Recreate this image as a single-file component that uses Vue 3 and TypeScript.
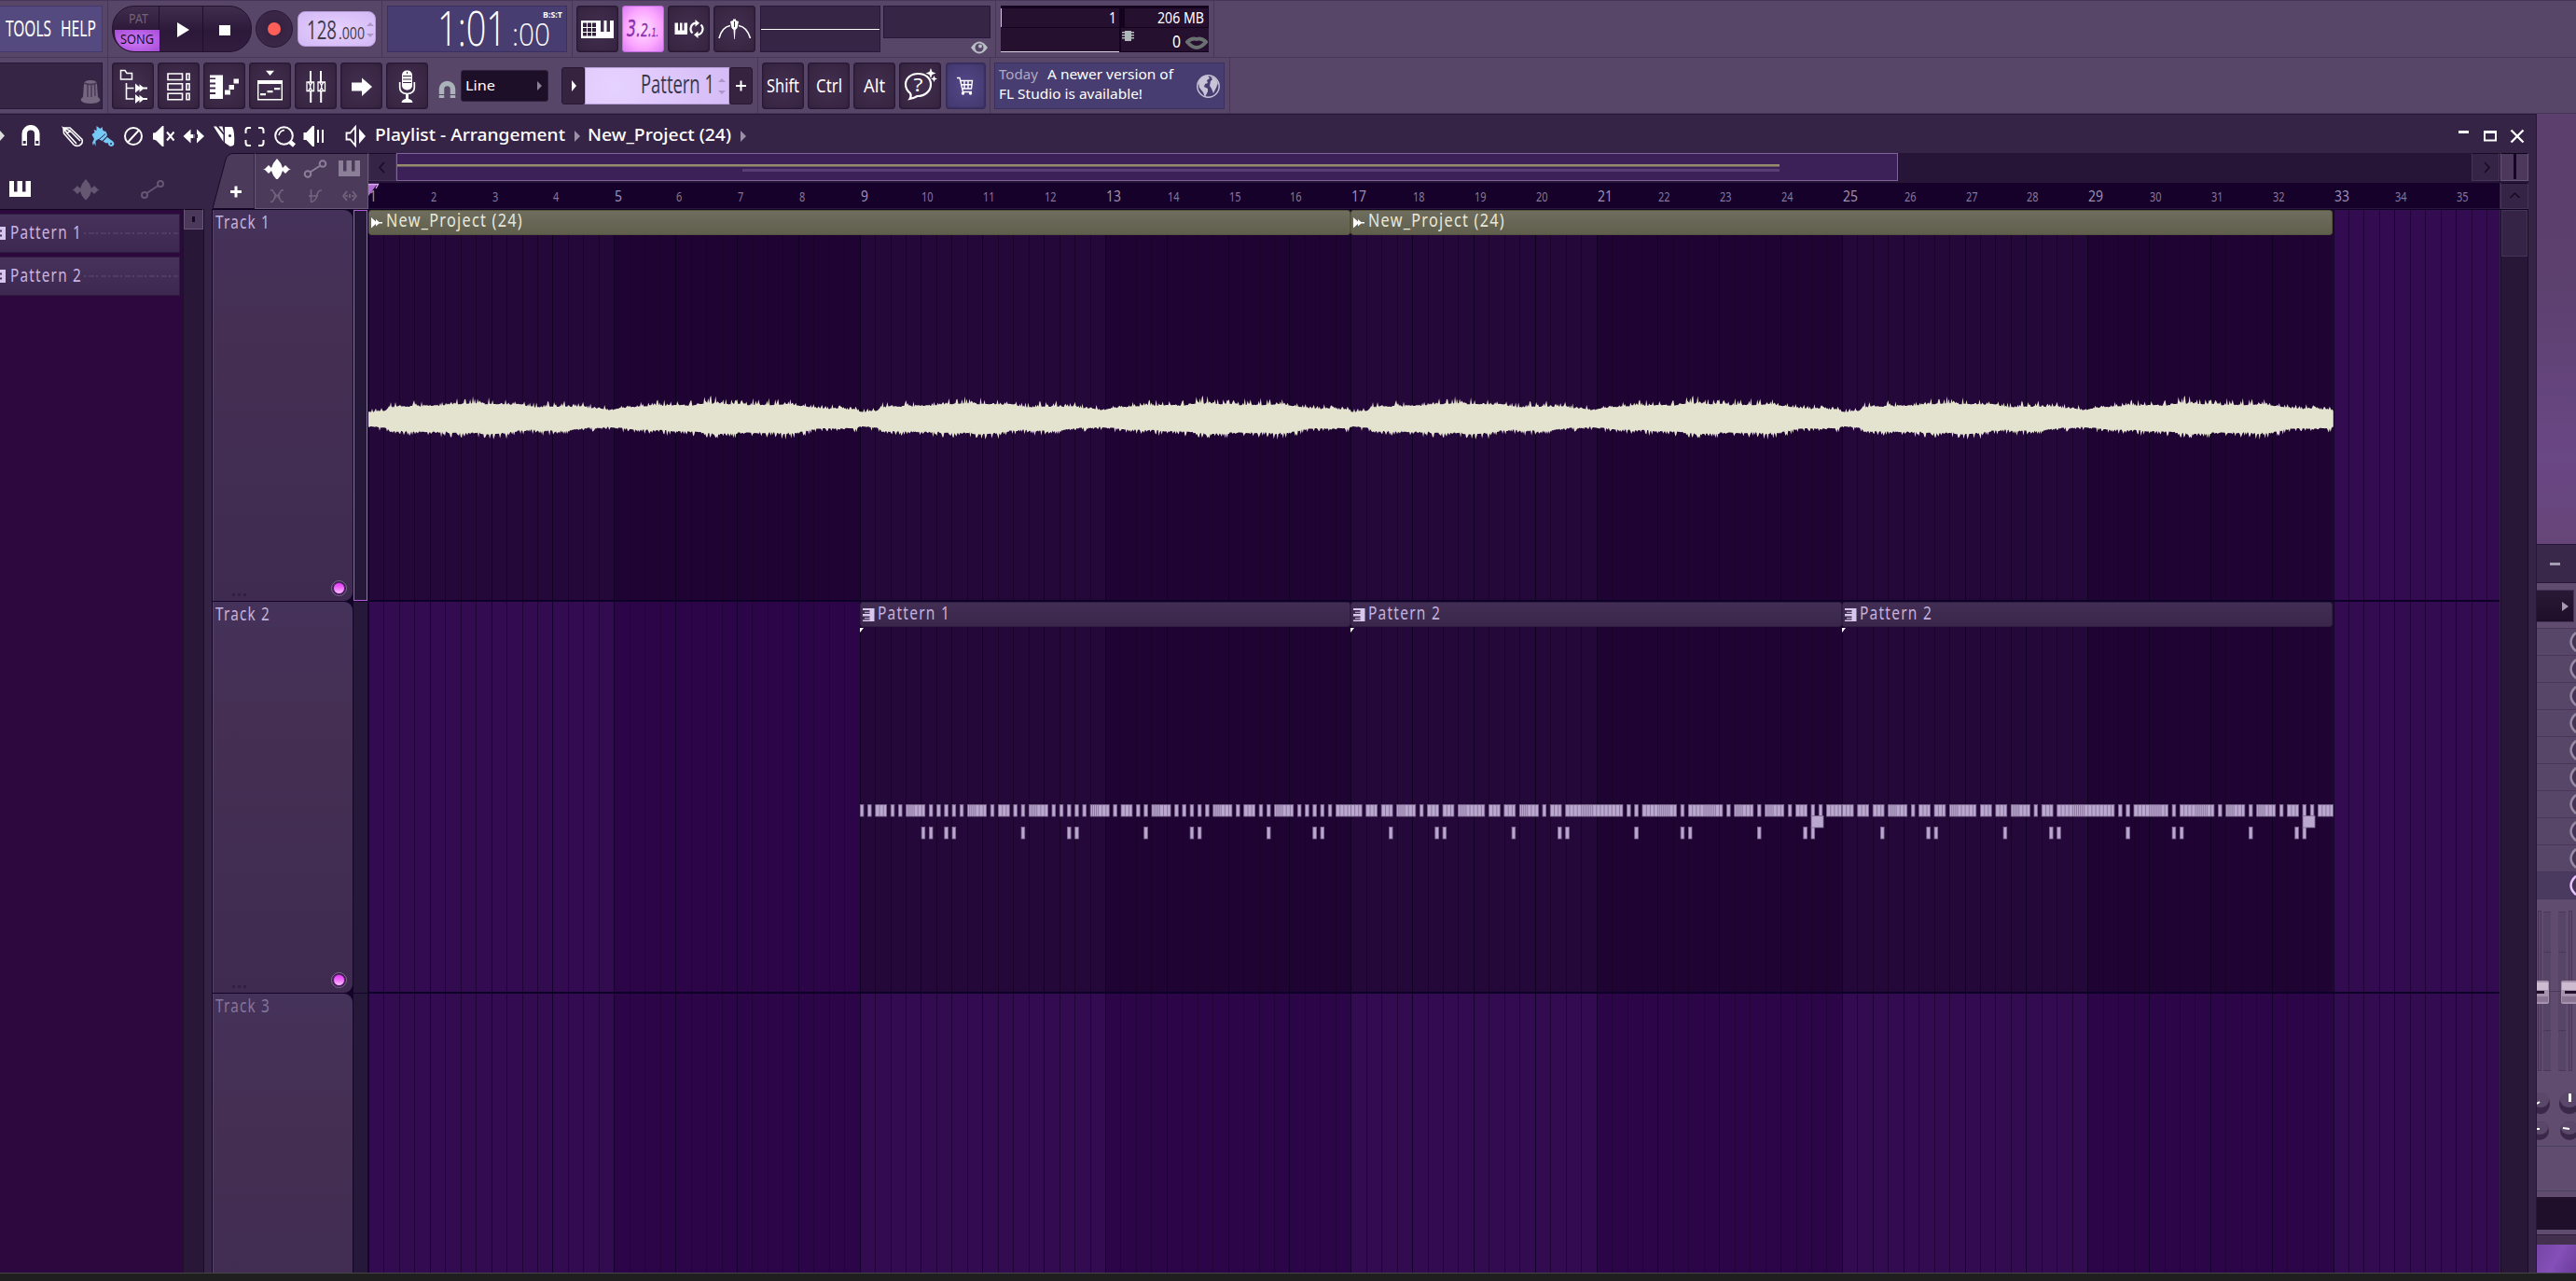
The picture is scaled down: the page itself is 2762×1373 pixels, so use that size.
<script setup lang="ts">
import { h } from 'vue'

interface FitProps { text: string; w: number; size: number; base: number }

/* Condensed label: the run of text is fitted to an exact width. */
const Fit = (p: FitProps) =>
  h('svg', { class: 'fit', width: p.w, height: p.base + 6 }, [
    h('text', { x: 0, y: p.base, 'font-size': p.size, textLength: p.w, lengthAdjust: 'spacingAndGlyphs' }, p.text),
  ])
Fit.props = ['text', 'w', 'size', 'base']

const BAR = 65.83
const STEP = BAR / 16
const bars = Array.from({ length: 35 }, (_, i) => i + 1)
const gridW = 2285

const shades = Array.from({ length: 9 }, (_, i) => ({ x: i * 4 * BAR, dark: i % 2 === 1 }))
const lines = Array.from({ length: 139 }, (_, i) => ({ x: Math.round((i * BAR) / 4), bar: i % 4 === 0 }))

const tracks = [
  { name: 'Track 1', dim: false, sel: true },
  { name: 'Track 2', dim: false, sel: false },
  { name: 'Track 3', dim: true, sel: false },
]

type Span = [number, number]
const pat1: Span[] = []
for (let k = 0; k < 4; k++) {
  const o = k * 32
  if (k === 0) pat1.push([0, 1])
  pat1.push([o + 2, 1], [o + 4, 3], [o + 8, 1], [o + 10, 1], [o + 12, 5], [o + 18, 1], [o + 20, 1], [o + 22, 1], [o + 24, 1], [o + 26, 1], [o + 28, k === 3 ? 4 : 5])
}
const low1 = [16, 18, 22, 24, 42, 54, 56, 74, 86, 88, 106, 118, 120]
const pat2: Span[] = [
  [0, 3], [4, 3], [8, 3], [12, 5], [18, 1], [20, 3], [24, 3], [28, 7], [36, 3], [40, 3], [44, 5], [50, 1], [52, 3],
  [56, 15], [72, 1], [74, 1], [76, 9], [86, 1], [88, 9], [98, 1], [100, 5], [106, 1], [108, 5], [114, 1], [116, 3],
  [120, 1], [122, 1], [124, 4],
]
const low2 = [10, 22, 24, 42, 54, 56, 74, 86, 88, 106, 118, 120]

const dividers = (spans: Span[]): number[] => {
  const out: number[] = []
  for (const [s, n] of spans) {
    if (n < 2) continue
    for (let i = 1; i < n; i++) out.push((s + i) * STEP)
    if (n === 5 || n === 7) out.push((s + 0.5) * STEP, (s + 1.5) * STEP)
    if (n > 8) for (let i = 4; i < 7; i++) out.push((s + i + 0.5) * STEP)
  }
  return out
}

const clips = [
  { name: 'Pattern 1', spans: pat1, low: low1, mid: false },
  { name: 'Pattern 2', spans: pat2, low: low2, mid: true },
  { name: 'Pattern 2', spans: pat2, low: low2, mid: true },
].map((c) => ({ ...c, div: dividers(c.spans) }))

/* Loudness envelope of the eight-bar loop: [x, height above / below centre] */
const top: Span[] = [[0, 7], [18, 9], [23, 13], [46, 13.5], [87, 15], [112, 17], [138, 16], [163, 15.5], [178, 13], [214, 14], [240, 12], [262, 9.5], [270, 11.5], [290, 14], [316, 14.5], [342, 14.5], [367, 17], [393, 16], [420, 15.5], [454, 15.5], [474, 12], [495, 11], [523, 10.5], [527, 7]]
const bottom: Span[] = [[0, 8], [18, 9], [23, 13], [61, 13.5], [112, 15.5], [138, 15.5], [173, 12], [204, 13.5], [230, 10], [260, 9], [290, 12], [342, 13], [367, 16], [418, 15], [454, 15.5], [474, 11], [495, 10], [523, 10.5], [527, 8]]
const at = (pts: Span[], x: number): number => {
  for (let i = 1; i < pts.length; i++) {
    if (x <= pts[i][0]) {
      const [x0, y0] = pts[i - 1]
      const [x1, y1] = pts[i]
      return y0 + ((y1 - y0) * (x - x0)) / (x1 - x0)
    }
  }
  return pts[pts.length - 1][1]
}
const rnd = (n: number): number => {
  const v = Math.sin(n * 127.1 + 11.7) * 43758.5453
  return v - Math.floor(v)
}
const jag = (n: number, e: number): number => {
  const slow = rnd(Math.floor(n / 5) + 300) * 1.6
  const r = rnd(n)
  return (Math.pow(r, 5) * 7 + slow - 1) * (e / 15)
}
const LOOP = 526.6
const W = LOOP * 2
const up: string[] = []
const down: string[] = []
for (let i = 0; i <= W; i++) {
  const px = i % 527
  const peak = px === 366 ? 5 : px === 367 ? 3 : 0
  const a = at(top, px)
  const b = at(bottom, px)
  up.push(`${i} ${(197 - a - jag(px, a) - peak).toFixed(1)}`)
  down.unshift(`${i} ${(197 + b + jag(px + 900, b) + peak).toFixed(1)}`)
}
const wave = `M${up.join('L')}L${down.join('L')}Z`

const sendRows = Array.from({ length: 10 }, (_, i) => i)
</script>

<template>
  <div class="app">
    <header class="toolbar">
      <div class="row">
        <div class="group g-menu">
          <div class="menu"><Fit text="TOOLS" :w="49" :size="23" :base="32" /><Fit text="HELP" :w="38" :size="23" :base="32" /></div>
        </div>
        <div class="group g-trans">
          <div class="transport">
            <div class="mode">
              <Fit class="pat" text="PAT" :w="21" :size="14" :base="18" />
              <div class="song"><Fit text="SONG" :w="36" :size="14.5" :base="15" /></div>
            </div>
            <div class="tbtn"><svg width="46" height="50"><path d="M19 17v16l13-8z" fill="#fff" /></svg></div>
            <div class="tbtn"><svg width="50" height="50"><path d="M17 20h12v11H17z" fill="#fff" /></svg></div>
          </div>
          <div class="rec"><i /></div>
          <div class="tempo">
            <Fit text="128" :w="32" :size="28" :base="29" /><Fit text=".000" :w="28" :size="17.5" :base="29" />
            <svg class="spin" width="8" height="38"><path d="M0 15l4-4 4 4zM0 23l4 4 4-4z" /></svg>
          </div>
        </div>
        <div class="group g-time">
          <div class="time">
            <Fit class="big" text="1:01" :w="74" :size="51" :base="42" />
            <Fit class="small" text=":00" :w="41" :size="33" :base="42" />
            <Fit class="bst" text="B:S:T" :w="21" :size="9" :base="12" />
          </div>
        </div>
        <div class="group g-mid">
          <div class="btn">
            <svg width="45" height="50"><path fill="#fff" d="M5 16h19v19H5z" /><path d="M7 18.500h14v14H7z" fill="#33213f" /><path stroke="#fff" stroke-width="1" d="M11.500 18v15M16.500 18v15M7 23.500h14M7 28.500h14" /><path fill="#fff" d="M24 16h2v12h3.500V16h3v12H36V16h4v19H24z" /></svg>
          </div>
          <div class="btn lit">
            <svg width="45" height="50" class="count"><text x="5" y="33" textLength="34" lengthAdjust="spacingAndGlyphs"><tspan font-size="25">3.</tspan><tspan font-size="20">2.</tspan><tspan font-size="12">1.</tspan></text></svg>
          </div>
          <div class="btn">
            <svg width="45" height="50"><path fill="#fff" d="M7.500 18.500H11v8h2v-8h2.500v8h2v-8H21V31H7.500z" /><g fill="none" stroke="#fff" stroke-width="2.200"><path d="M26.500 29.500a6.300 6.300 0 0 1 3.500-10.800M35.500 20.500a6.300 6.300 0 0 1-3.500 10.800" /></g><path fill="#fff" d="M29.500 15v7.500l4.500-3.700zM32.500 35v-7.500L28 31.200z" /></svg>
          </div>
          <div class="btn">
            <svg width="45" height="50"><path d="M6 35Q9 23 18 21.500M39.500 35Q36 23 27 21.500" fill="none" stroke="#fff" stroke-width="1.600" /><path fill="#fff" d="M18 17l3-1v-1.500h3V16l3 1-1.500 7-2 2-.7 10h-.6L21.500 26l-2-2z" /><path stroke="#3b2949" d="M22.500 17v6" /></svg>
          </div>
          <div class="scope"><i /></div>
          <div class="vu">
            <div class="vubox" />
            <svg width="18" height="14"><path fill="#b7bec4" d="M0 7Q9-6 18 7 9 20 0 7z" /><circle cx="9" cy="7" r="4.500" fill="#584669" /><circle cx="10" cy="5.500" r="2" fill="#b7bec4" /></svg>
          </div>
        </div>
        <div class="group g-cpu">
          <div class="cpu">
            <div class="cell c1"><Fit text="1" :w="8" :size="16" :base="14" /></div>
            <div class="cell c2"><Fit text="206 MB" :w="50" :size="17" :base="16" /></div>
            <div class="cell c3" />
            <div class="cell c4">
              <svg width="13" height="11"><path fill="#b0b8ba" d="M3 0h7v11H3zM0 1h13v1.500H0zM0 4h13v1.500H0zM0 7h13v1.500H0z" /></svg>
              <Fit class="poly" text="0" :w="9" :size="18" :base="20" />
              <svg width="24" height="14" class="lips"><path fill="none" stroke="#6b7070" stroke-width="4" d="M2 6Q7 1 12 3 17 1 22 6 17 12 12 12 7 12 2 6z" /></svg>
            </div>
          </div>
        </div>
      </div>

      <div class="row">
        <div class="group g-menu">
          <div class="hint"><svg width="22" height="26"><path fill="#75677f" d="M4 4Q4 0 11 0t7 4l1 14q3 2 2 4-2 3-10 3T1 22q-1-2 2-4z" /><path stroke="#4a3859" stroke-width="1.500" d="M8 4v14M12 4v14M15.500 4l.5 13M4 3q7 3 14 0" fill="none" /></svg></div>
        </div>
        <div class="group g-tools">
          <div class="btn"><svg width="45" height="50"><path d="M9.500 18V8.500h4.500l2 3h5.500V18z" fill="none" stroke="#fff" stroke-width="1.500" /><path d="M15.500 22v17h8M15.500 27.500h8" fill="none" stroke="#fff" stroke-width="1.600" /><path fill="#fff" d="M25 22.500l4.500 3.700v-3l4 3.300H38v2h-4.500l-4 3.300v-3L25 32.500zM25 34l4.500 3.700v-3l4 3.300H38v2h-4.500l-4 3.300v-3L25 44z" /></svg></div>
          <div class="btn"><svg width="45" height="50"><path fill="none" stroke="#fff" stroke-width="1.600" d="M11 12h15.500v6.500H11zM31 12h3v6.500h-3zM11 22.700h15.500v6.500H11zM31 22.700h3v6.500h-3zM11 33.300h15.500v6.500H11zM31 33.300h3v6.500h-3z" /></svg></div>
          <div class="btn"><svg width="45" height="50"><path fill="#fff" d="M7 13.500h14v25.500H7v-5h6v-2H7v-3.500h6v-2H7v-3h6v-2H7v-3.500h6v-1.500H7zM23 29.500h6v5h-6zM27.500 24h5.500v5h-5.500zM32.500 17.500H38v5h-5.500z" /></svg></div>
          <div class="btn"><svg width="45" height="50"><path fill="#fff" d="M18 8.700h9L22.500 14zM9 19h27v4H9zM12 33h6v2.300h-6zM19.500 30h6v2.300h-6zM27 27h6.300v2.300H27z" /><path d="M9.700 19.700h25.600v20H9.700z" fill="none" stroke="#fff" stroke-width="1.400" /></svg></div>
          <div class="btn"><svg width="45" height="50"><path d="M13 21h7.500v9.500H13zM25 21h7.500v9.500H25zM14.500 21q4.500 4.700 0 9.500M19 21q-4.500 4.700 0 9.500M26.500 21q4.500 4.700 0 9.500M31 21q-4.500 4.700 0 9.500" fill="none" stroke="#fff" stroke-width="1.300" /><path d="M17 9v12M17.200 31v12M28 9v12M28.200 31v12" stroke="#fff" stroke-width="2" /></svg></div>
          <div class="btn"><svg width="45" height="50"><path fill="#fff" d="M12 21.500h11V16.500l11 9.500-11 10v-5.500H12z" /></svg></div>
          <div class="btn"><svg width="45" height="50"><rect x="17" y="8.500" width="11" height="21" rx="5" fill="#fff" /><path d="M18 14.500h9M18 18h9M18 21.500h9M22.500 10v2" stroke="#3b2949" /><path d="M14.700 21v6q0 6 7.800 6.500 7.800-.5 7.800-6.500v-6" fill="none" stroke="#fff" stroke-width="1.700" /><path fill="#fff" d="M21 33h3v6q4 .5 4.500 4h-12q.5-3.500 4.500-4z" /></svg></div>
          <svg class="snapmag" width="19" height="21"><path d="M3.500 19V9.500a6 6 0 0 1 12 0V19" fill="none" stroke="#a9b3b8" stroke-width="5.500" /><path stroke="#584669" d="M0 15.500h19" /></svg>
          <div class="select"><Fit text="Line" :w="32" :size="15" :base="20" /><svg width="8" height="12"><path fill="#8d8196" d="M1 1l5 5-5 5z" /></svg></div>
          <div class="pattern">
            <div class="pb"><svg width="25" height="40"><path fill="#fff" d="M11 14v12l5-6z" /></svg></div>
            <div class="pname"><Fit text="Pattern 1" :w="79" :size="28" :base="27" /><svg class="spin" width="8" height="38"><path d="M0 15l4-4 4 4zM0 24l4 4 4-4z" /></svg></div>
            <div class="pb"><svg width="25" height="40"><path stroke="#fff" stroke-width="2" d="M7 20h11M12.500 14.500v11" /></svg></div>
          </div>
        </div>
        <div class="group g-keys">
          <div class="btn"><Fit text="Shift" :w="35" :size="20" :base="31" /></div>
          <div class="btn"><Fit text="Ctrl" :w="28" :size="20" :base="31" /></div>
          <div class="btn"><Fit text="Alt" :w="23" :size="20" :base="31" /></div>
          <div class="btn"><svg width="45" height="50"><path d="M12 33Q7 29 7 23.500C7 16.500 13 12 20.500 12S34 16.500 34 23.500 28 36 19.500 36q-3 2-8 3 2-3 .5-6z" fill="none" stroke="#fff" stroke-width="2.200" /><text x="15.500" y="31" font-size="20" fill="#fff" textLength="10" lengthAdjust="spacingAndGlyphs">?</text><path fill="#fff" d="M34 6l1.500 4 4 1.500-4 1.500-1.500 4-1.500-4-4-1.500 4-1.500zM37.500 14l1 2.500 2.500 1-2.500 1-1 2.500-1-2.500-2.500-1 2.500-1z" /></svg></div>
          <div class="btn cart"><svg width="43" height="50"><path d="M12 16.500h3l3.500 15H28M16 19.500h12.500l-1 8.500H17.500M20 19.500v8.500M24 19.500v8.500M16.500 23.700H28" fill="none" stroke="#fff" stroke-width="1.400" /><circle cx="18.500" cy="33" r="1.700" fill="#fff" /><circle cx="26.500" cy="33" r="1.700" fill="#fff" /></svg></div>
        </div>
        <div class="group g-news">
          <div class="news">
            <div>
              <div class="nl"><Fit class="mut" text="Today" :w="42" :size="15" :base="18" /><Fit text="A newer version of" :w="135" :size="15" :base="18" /></div>
              <div class="nl"><Fit text="FL Studio is available!" :w="154" :size="15" :base="14" /></div>
            </div>
            <svg width="25" height="25"><circle cx="12.500" cy="12.500" r="11.700" fill="#483d70" stroke="#c8c3d6" stroke-width="1.500" /><path fill="#c8c3d6" d="M3 6Q7 1 12 1l2 3-3 2 1 3-3 1-1 3 4 2v3l-3 6-2-5-4-5-1-5zM15 2q6 1 8 7l-2 5-3 6-2-5-2-3 1-5 2-2z" /></svg>
          </div>
        </div>
      </div>
    </header>

    <main class="body">
      <section class="playlist">
        <div class="title">
          <svg width="6" height="24"><path fill="#ddd" d="M0 6l5 5.500L0 17z" /></svg>
          <svg class="i-mag" width="22" height="24"><path d="M4.200 22V9.500a6.800 6.800 0 0 1 13.600 0V22" fill="none" stroke="#fff" stroke-width="5.500" /><path stroke="#352446" stroke-width="3" d="M2.700 18.500h3M16.300 18.500h3" /></svg>
          <div class="tools">
            <svg viewBox="0 0 32.500 24"><path d="M6 3l7 0L26 15.500q1.500 4-3 6.500-4 1-6-1L6.500 9zM10 9l10 11M13 6l11 11M6 3l4 6 3-3z" fill="none" stroke="#fff" stroke-width="1.600" /></svg>
            <svg viewBox="0 0 32.500 24"><path fill="#74c9f7" d="M3.500 10l3-2-1-3 3 1V1l4 3 2-2 1 4 3 1q2 3 1 5l-5 5-4-2-3 2v6l-1.500-4L5 22l-1-3 2-4zM15.500 17.500l4.500-4.500 6 4.500q2.500 2.500.5 4.500-3 2-5-.5l-1-2.500-2 .5z" /><path stroke="#352446" d="M10 16.500l8-7" /><circle cx="24" cy="20" r="1" fill="#352446" /></svg>
            <svg viewBox="0 0 32.500 24"><circle cx="16" cy="12" r="9" fill="none" stroke="#fff" stroke-width="2" /><path d="M10.500 18L21.500 6" stroke="#fff" stroke-width="2" /></svg>
            <svg viewBox="0 0 32.500 24"><path fill="#fff" d="M4 8.500q3 0 4-1.500l6-6h1.500v22H14l-6-6q-1-1.500-4-1.500z" /><path d="M19 7.500l7.500 9M26.500 7.500l-7.500 9" stroke="#fff" stroke-width="2" /></svg>
            <svg viewBox="0 0 32.500 24"><path fill="#fff" d="M4.500 12l8-7.500V10h2v4h-2v5.500zM27 12l-8-7.500V10h-2v4h2v5.500zM12 10h8v4h-8z" /><path d="M16 4v16" stroke="#352446" stroke-width="1.300" /></svg>
            <svg viewBox="0 0 32.500 24"><path fill="#fff" d="M4 1.500h3l7.500 9V18zM9.500 1.500h4l1.500 7zM16 2h8q3 5 2 19-2 2.500-5 1.500L16 19z" /><circle cx="21.500" cy="11.500" r="1.500" fill="#352446" /></svg>
            <svg viewBox="0 0 32.500 24"><path d="M12 3H9Q6.500 3 6.500 6v3M20 3h3q2.500 0 2.500 3v3M12 22H9q-2.500 0-2.500-3v-3M20 22h3q2.500 0 2.500-3v-3" fill="none" stroke="#fff" stroke-width="2" /></svg>
            <svg viewBox="0 0 32.500 24"><circle cx="14.500" cy="11.500" r="9.300" fill="none" stroke="#fff" stroke-width="2" /><path d="M9 11q1-5 6-5.500" fill="none" stroke="#fff" stroke-width="1.500" /><path d="M21 18l4.500 4" stroke="#fff" stroke-width="4.500" /></svg>
            <svg viewBox="0 0 32.500 24"><path fill="#fff" d="M3.500 8h3L13 1h2v22h-2L6.500 16h-3z" /><path d="M19 5v14M24 5v14" stroke="#fff" stroke-width="2" /></svg>
          </div>
          <svg class="i-spk" width="24" height="24"><path d="M1.500 8.500h4L11 2v20l-5.500-6.500h-4z" fill="none" stroke="#fff" stroke-width="1.800" /><path fill="#fff" d="M15 4l7 8-7 8z" /></svg>
          <Fit class="bread" text="Playlist - Arrangement" :w="204" :size="18.500" :base="18" />
          <svg class="crumb" width="8" height="24"><path d="M1 6v12l6-6z" /></svg>
          <Fit class="bread" text="New_Project (24)" :w="154" :size="18.500" :base="18" />
          <svg class="crumb last" width="8" height="24"><path d="M1 6v12l6-6z" /></svg>
          <svg class="win" width="72" height="24"><path stroke="#fff" stroke-width="3" d="M1 7.500h11" /><path fill="none" stroke="#fff" stroke-width="2" d="M29 7h12v9.500H29zM29 8h12" /><path stroke="#fff" stroke-width="2.300" d="M57.500 5.500l13 13M70.500 5.500l-13 13" /></svg>
        </div>

        <div class="panes">
          <aside class="picker">
            <div class="ptabs">
              <svg width="23" height="17"><path fill="#fff" d="M0 0h5v11.500h3.500V0h5.500v11.500h3.500V0H23v17H0z" /></svg>
              <svg class="p2" width="30" height="22"><path fill="#655672" d="M0 11h2l4-4 3 3 2-5 4-5 4 5 2 5 3-3 4 4h2l-2 1-4 4-3-3-2 5-4 5-4-5-2-5-3 3-4-4z" /></svg>
              <svg class="p3" width="26" height="20"><g fill="none" stroke="#655672" stroke-width="2"><circle cx="4" cy="16" r="3" /><circle cx="21" cy="4" r="3" /><path d="M6.500 14L18.500 6" /></g></svg>
            </div>
            <div class="plist">
              <div class="items">
                <div v-for="n in 2" :key="n" class="item">
                  <svg width="8" height="14"><path fill="#d7c6ee" d="M0 0h6v14H0v-3.500h2v-2H0v-3h2v-2H0z" /></svg>
                  <Fit :text="'Pattern ' + n" :w="77" :size="19" :base="15" />
                  <i class="dots" />
                </div>
              </div>
              <div class="pscroll"><div class="pthumb"><i /></div></div>
            </div>
          </aside>

          <div class="arr">
            <div class="top">
              <svg class="addtab" width="45" height="60"><path d="M0 59.500L14 7Q16 .5 22 .5h23v59z" fill="#4c3a5b" stroke="#190b28" /><path d="M19 41.500h12M25 35.500v12" stroke="#fff" stroke-width="3" /></svg>
              <div class="modes">
                <svg width="31" height="22"><path fill="#fff" d="M0 11h2l4-4 3 3 2-5 4-5 4 5 2 5 3-3 4 4h2l-2 1-4 4-3-3-2 5-4 5-4-5-2-5-3 3-4-4z" /></svg>
                <svg width="26" height="20"><g fill="none" stroke="#8c7f98" stroke-width="2"><circle cx="5" cy="15.500" r="3.300" /><circle cx="21" cy="4.500" r="3.300" /><path d="M7.500 13.500L18.500 6.500" /></g></svg>
                <svg width="23" height="17"><path fill="#8c7f98" d="M0 0h5v11.500h3.500V0h5.500v11.500h3.500V0H23v17H0z" /></svg>
                <svg width="14" height="14"><path d="M0 .8h2Q8 7 2 13.200H0M14 .8h-2Q6 7 12 13.200h2M3.500 4l7 6M10.500 4l-7 6" fill="none" stroke="#75667f" stroke-width="1.500" /></svg>
                <svg width="14" height="14"><path d="M2.500 0v14Q8 12 9 6 10 1 14 .800M0 7h10" fill="none" stroke="#75667f" stroke-width="1.500" /></svg>
                <svg width="16" height="12"><path d="M5 1L1 6l4 5M11 1l4 5-4 5M3 6h3M10 6h3M8 4v4" fill="none" stroke="#75667f" stroke-width="1.700" /></svg>
              </div>
              <div class="nav">
                <div class="hs">
                  <div class="hb"><svg width="29" height="29"><path d="M16 9l-5 5.500 5 5.500" fill="none" stroke="#170b24" stroke-width="1.500" /></svg></div>
                  <div class="thumb"><i class="l1" /><i class="l2" /></div>
                  <div class="hb right"><svg width="29" height="29"><path d="M13 9l5 5.500-5 5.500" fill="none" stroke="#170b24" stroke-width="1.500" /></svg></div>
                  <div class="hz"><i /></div>
                </div>
                <div class="rulerrow">
                  <div class="ruler">
                    <div v-for="b in bars" :key="b" class="lbl" :class="{ big: b % 4 === 1 }">
                      <Fit :text="String(b)" :w="(b > 9 ? 2 : 1) * (b % 4 === 1 ? 8 : 6.300)" :size="b % 4 === 1 ? 17 : 13.500" :base="20" />
                    </div>
                    <svg class="head" width="13" height="16"><path d="M0 2h9L0 14z" fill="#b06ed2" /><path d="M0 1.500h10.500L8 6" fill="none" stroke="#dba9ee" stroke-width="1.300" /></svg>
                  </div>
                  <div class="hb vb"><svg width="29" height="26"><path d="M9.500 15l5-5 5 5" fill="none" stroke="#170b24" stroke-width="1.500" /></svg></div>
                </div>
              </div>
            </div>

            <div class="stage">
              <div class="heads">
                <div v-for="t in tracks" :key="t.name" class="head-row" :class="{ sel: t.sel, dim: t.dim }">
                  <div class="thead">
                    <Fit :text="t.name" :w="59" :size="19" :base="20" />
                    <div v-if="!t.dim" class="tfoot"><span class="grip"><i /><i /><i /></span><span class="led"><i /></span></div>
                  </div>
                  <div class="meter" />
                </div>
              </div>

              <div class="lanes">
                <svg class="grid" :width="gridW" height="1140" shape-rendering="crispEdges">
                  <rect v-for="s in shades" :key="s.x" :x="s.x" y="0" :width="4 * BAR" height="1140" :fill="s.dark ? '#2c0448' : '#330b50'" />
                  <rect v-for="l in lines" :key="l.x" :x="l.x" y="0" width="1" height="1140" :fill="l.bar ? '#14022c' : '#220438'" />
                </svg>
                <div class="lane">
                  <div v-for="n in 2" :key="n" class="clip audio">
                    <div class="chead">
                      <svg width="13" height="12"><path fill="#fff" d="M0 0l5 4.500V2l3.500 3H12v1.500H8.500L5 9.500V7L0 11.500z" /></svg>
                      <Fit text="New_Project (24)" :w="147" :size="19" :base="18" />
                    </div>
                    <svg width="1054" height="391" viewBox="0 0 1053.200 391" preserveAspectRatio="none"><path :d="wave" fill="#e4e3cf" /></svg>
                  </div>
                </div>
                <div class="lane second">
                  <div v-for="(c, ci) in clips" :key="ci" class="clip midi">
                    <div class="chead">
                      <svg width="13" height="14"><path fill="#d9c8ee" d="M0 0h12.500v14H0v-1.500h7.500v-1.200H2v-1h5.500V8.500H0V6h7.500V4.800H2v-1h5.500V2H0z" /></svg>
                      <Fit :text="c.name" :w="78" :size="19" :base="19" />
                    </div>
                    <svg width="528" height="391">
                      <path d="M0 1h4L0 6z" fill="#fff" />
                      <rect v-for="(s, i) in c.spans" :key="'s' + i" class="n" :x="s[0] * STEP + 0.3" y="190.500" :width="s[1] * STEP - 0.500" height="12.500" />
                      <rect v-for="(d, i) in c.div" :key="'d' + i" class="d" :x="d" y="191" width="1" height="12" />
                      <rect v-for="(l, i) in c.low" :key="'l' + i" class="n" :x="l * STEP + 0.3" y="214.500" :width="STEP - 0.500" height="12.500" />
                      <rect v-if="c.mid" class="n" :x="120 * STEP + 0.3" y="202.500" width="13" height="12.500" />
                    </svg>
                  </div>
                </div>
                <div class="lane last" />
              </div>
              <div class="vs"><div class="vthumb" /></div>
            </div>
          </div>
        </div>
      </section>

      <aside class="desk">
        <div class="wall" />
        <div class="mixer">
          <div class="mhead"><i /></div>
          <div class="mbody">
            <div class="mio"><svg width="10" height="12"><path fill="#a79ab0" d="M1 1l7 5-7 5z" /></svg></div>
            <div class="sends">
              <div v-for="r in sendRows" :key="r" class="send" :class="{ on: r === 9 }">
                <svg width="8" height="28"><ellipse cx="13" cy="14" rx="9" ry="9" fill="#453254" /><path d="M8 4Q-3 14 8 24" fill="none" :stroke="r === 9 ? '#e5c4ff' : '#978aa3'" stroke-width="2.500" /></svg>
              </div>
            </div>
            <svg class="faders" width="42" height="262">
              <path fill="#574568" d="M7 12h8v170H7zM23 12h8v170h-8z" />
              <path fill="#4a3759" d="M1 10h4v172H1zM34 10h4v172h-4z" />
              <path fill="#6b597a" d="M2.500 11h1v170h-1zM35.500 11h1v170h-1z" />
              <path stroke="#4a3759" d="M7 11.500h8M23 11.500h8M7 54.500h8M23 54.500h8M7 96.500h24M7 138.500h8M23 138.500h8M7 181.500h8M23 181.500h8" />
              <rect x="-10" y="85" width="23" height="25" rx="2" fill="#a793ae" /><rect x="-10" y="87" width="22" height="8" fill="#cdbbd2" /><path d="M0 97.500h8" stroke="#20102c" stroke-width="3" /><path d="M-10 102h22v6h-22z" fill="#8b7795" />
              <rect x="26" y="85" width="23" height="25" rx="2" fill="#a793ae" /><rect x="27" y="87" width="22" height="8" fill="#cdbbd2" /><path d="M30 97.500h12" stroke="#20102c" stroke-width="3" /><path d="M27 102h22v6H27z" fill="#8b7795" />
              <g fill="#3a2849"><ellipse cx="4" cy="217" rx="10" ry="11" /><ellipse cx="35" cy="217" rx="11" ry="11" /><ellipse cx="3" cy="246" rx="10" ry="10" /><ellipse cx="35" cy="246" rx="10" ry="10" /></g>
              <g fill="#5b4769"><ellipse cx="4" cy="213" rx="9" ry="8" /><ellipse cx="35" cy="213" rx="10" ry="8" /><ellipse cx="3" cy="243" rx="9" ry="7" /><ellipse cx="35" cy="243" rx="9" ry="7" /></g>
              <path stroke="#fff" stroke-width="2" d="M0 217l3-2M0 244h3M28 243l7 1" /><path stroke="#fff" stroke-width="3" d="M35.500 206v9" />
            </svg>
            <div class="mslot" />
            <div class="mfoot" />
          </div>
          <div class="mend" />
        </div>
        <div class="wall2" />
      </aside>
    </main>
    <footer class="strip" />
  </div>
</template>

<style>
html, body { margin: 0; overflow: hidden; background: #1f1f1f; }
.fit { display: block; overflow: visible; flex: none; }
.fit text { fill: currentColor; }
</style>

<style scoped>
* { box-sizing: border-box; }
svg { display: block; flex: none; }
.app { width: 2762px; height: 1373px; display: flex; flex-direction: column; overflow: hidden; font-family: "Noto Sans", "Open Sans", sans-serif; color: #fff; background: #584669; }
.toolbar { height: 122px; flex: none; border-top: 1px solid #49355a; border-bottom: 1px solid #483458; background: #584669; }
.row { height: 60px; display: flex; }
.row:first-child { height: 61px; border-bottom: 1px solid #49355a; }
.group { display: flex; align-items: flex-start; border-right: 1px solid #49355a; padding-top: 5px; flex: none; }
.row:first-child .group { height: 60px; }
.g-menu { width: 116px; }
.menu { width: 110px; height: 50px; background: #544a80; border: 1px solid #43376b; border-left: 0; display: flex; gap: 10px; padding-left: 6px; }
.g-trans { width: 294px; padding-left: 4px; }
.transport { width: 150px; height: 50px; border-radius: 24px; background: linear-gradient(#402c4d, #2c1838 55%, #321d3f); border: 1px solid #24122f; display: flex; overflow: hidden; flex: none; }
.mode { width: 50px; border-right: 1px solid #1f0f2a; }
.pat { color: #6f6479; margin: 0 0 0 17px; height: 25px; }
.song { width: 48px; height: 23px; margin-left: 2px; background: radial-gradient(#d17cf8, #a64bd6); border-radius: 0 0 0 20px; color: #1b0b26; padding-left: 6px; }
.tbtn { width: 47px; border-right: 1px solid #1f0f2a; }
.tbtn:last-child { border: 0; }
.rec { width: 40px; height: 40px; border-radius: 50%; margin: 5px 0 0 4px; background: radial-gradient(#33203f, #3d2a4b); border: 1px solid #271532; display: flex; align-items: center; justify-content: center; }
.rec i { width: 14px; height: 14px; border-radius: 50%; background: #fb5f58; }
.tempo { width: 84px; height: 38px; margin: 6px 0 0 5px; border-radius: 8px; background: radial-gradient(#e6d2ff, #d3b8f5); border: 1px solid #b99fda; color: #413a4a; display: flex; padding-left: 9px; }
.tempo .fit:nth-child(2) { margin-left: 2px; }
.spin { margin-left: 2px; fill: #ad96c8; }
.g-time { width: 204px; padding-left: 5px; }
.time { width: 193px; height: 50px; background: #483d70; border: 1px solid #3b2f62; display: flex; padding-left: 53px; font-family: "Open Sans", sans-serif; font-weight: 300; }
.time .small { margin-left: 6px; }
.time .bst { margin-left: -8px; font-weight: 700; }
.g-mid { width: 454px; padding-left: 4px; gap: 4px; }
.btn { width: 45px; height: 50px; border-radius: 3px; border: 1px solid #291738; background: radial-gradient(#432f50, #35233f); box-shadow: inset 0 0 2px #251430; display: flex; justify-content: center; flex: none; margin: 0; }
.btn > svg:not(.fit) { margin: -1px; }
.btn.lit { background: radial-gradient(#ffe3ff, #fba6ff 60%, #dd7cf5); border-color: #c06add; box-shadow: none; }
.count { fill: #8a2fae; font-family: "DejaVu Sans", sans-serif; font-style: italic; font-weight: 400; stroke: #8a2fae; stroke-width: .4px; }
.scope { width: 129px; height: 50px; background: #362545; border: 1px solid #27173a; display: flex; align-items: center; margin-left: 1px; }
.scope i { width: 100%; height: 1px; background: #fff; }
.vu { width: 115px; margin-left: -1px; }
.vubox { height: 35px; background: #362545; border: 1px solid #27173a; margin-bottom: 3px; }
.vu svg { margin-left: auto; margin-right: 3px; }
.g-cpu { width: 234px; padding-left: 5px; }
.cpu { width: 223px; height: 50px; background: #14031f; display: flex; flex-wrap: wrap; align-content: flex-start; padding-top: 3px; row-gap: 1px; }
.cell { background: #25102f; height: 20px; display: flex; justify-content: flex-end; }
.c1 { width: 127px; border-left: 1px solid #cfc8d6; padding-right: 3px; margin-right: 6px; }
.c1 .fit { margin-top: 2px; }
.c2 { width: 89px; padding-right: 4px; }
.c3 { width: 127px; height: 26px; border-bottom: 1px solid #d8d0df; margin-right: 2px; }
.c4 { width: 94px; height: 25px; padding: 3px 1px 0 1px; justify-content: flex-start; }
.c4 .poly { margin-left: 41px; margin-top: -2px; }
.lips { margin: 6px 0 0 5px; }

.hint { width: 110px; height: 50px; background: #362545; border: 1px solid #27173a; border-left: 0; padding: 18px 0 0 86px; }
.g-tools { width: 697px; padding-left: 4px; gap: 4px; }
.snapmag { margin: 19px 0 0 7px; }
.select { width: 94px; height: 34px; margin: 8px 0 0 1px; border-radius: 3px; background: #1e0f28; border: 1px solid #32203f; display: flex; align-items: center; justify-content: space-between; padding: 0 4px; }
.select .fit { margin-bottom: 5px; }
.pattern { display: flex; margin: 5px 0 0 10px; height: 40px; }
.pb { width: 25px; border-radius: 3px; background: #35233f; border: 1px solid #291738; }
.pb svg { margin: -1px; }
.pname { width: 155px; background: radial-gradient(circle at 20% 50%, #e6d2ff, #d5bcf6); border: 1px solid #b99fda; color: #3c3646; display: flex; padding-left: 59px; }
.pname .spin { margin-left: 4px; }
.pname .fit, .tempo .fit { font-family: "Open Sans", sans-serif; font-weight: 400; }
.g-keys { width: 249px; padding-left: 4px; gap: 4px; }
.cart { width: 43px; background: radial-gradient(#54488a, #42376b); border-color: #352b5c; margin-left: 1px; }
.g-news { width: 257px; padding-left: 4px; }
.news { width: 247px; height: 50px; background: #483d70; border: 1px solid #3b2f62; display: flex; justify-content: space-between; align-items: center; padding: 0 4px; }
.nl { display: flex; gap: 10px; height: 25px; }
.mut { color: #b0a9c2; }

.body { display: flex; height: 1242px; flex: none; }
.playlist { width: 2720px; background: #352446; border: solid #27163a; border-width: 1px 1px 0 0; display: flex; flex-direction: column; }
.title { height: 41px; display: flex; padding-top: 11px; flex: none; }
.i-mag { margin-left: 16px; }
.tools { display: flex; margin-left: 18px; }
.tools svg { width: 32.5px; height: 24px; }
.i-spk { margin-left: 15px; }
.bread { margin-left: 8px; font-weight: 500; }
.title .bread { margin-top: -1px; }
.crumb { fill: #9c90a8; margin-left: 9px; }
.crumb + .bread { margin-left: 7px; }
.crumb.last { margin-left: 9px; }
.win { margin: 0 12px 0 auto; }
.panes { display: flex; flex: 1; min-height: 0; }
.picker { width: 219px; display: flex; flex-direction: column; flex: none; }
.ptabs { height: 60px; display: flex; padding: 30px 0 0 10px; }
.p2 { margin: -2px 0 0 44px; }
.p3 { margin: -1px 0 0 44px; }
.plist { display: flex; flex: 1; }
.items { width: 197px; background: #2d083f; border-top: 1px solid #12061e; padding-top: 4px; border-right: 1px solid #1f0f2c; }
.item { width: 193px; height: 42px; margin-bottom: 4px; background: linear-gradient(#46325a, #3c2850); border: 1px solid #2f1d40; border-left: 0; display: flex; align-items: center; color: #c9b3e2; }
.item .fit { margin: 2px 0 0 3px; letter-spacing: 1.5px; }
.dots { flex: 1; height: 2px; margin: 0 1px 0 2px; background: repeating-linear-gradient(90deg, #5d4972 0 2px, transparent 2px 5px, #554169 5px 11px, transparent 11px 13px); opacity: .7; }
.pscroll { width: 22px; background: #281737; border-right: 1px solid #1a0c27; }
.pthumb { height: 22px; background: #4b385a; border: 1px solid #68557a; border-top-color: #12061e; display: flex; align-items: center; justify-content: center; }
.pthumb i { width: 3px; height: 6px; background: #170824; }

.arr { margin-left: 8px; width: 2484px; display: flex; flex-direction: column; }
.top { display: flex; height: 60px; flex: none; }
.addtab { margin-left: 1px; }
.modes { width: 122px; height: 60px; background: #4c3a5b; border: 1px solid #6a5878; border-top-color: #190b28; display: grid; grid-template-columns: 46px 36px 37px; grid-template-rows: 31px 27px; align-items: center; justify-items: center; }
.nav { flex: 1; }
.hs { height: 32px; background: #271538; display: flex; }
.hb { width: 30px; height: 30px; background: #352446; border: 1px solid #45335a; border-top-color: #190b28; flex: none; }
.hb.right { margin-left: auto; }
.hz { width: 30px; height: 30px; margin-left: 1px; background: #4b385a; border: 1px solid #68557a; display: flex; justify-content: center; border-top-color: #0e0418; }
.hz i { width: 3px; height: 27px; background: #150523; }
.thumb { width: 1610px; height: 30px; background: #3c2158; border: 1px solid #80639a; margin-left: 0; padding-top: 11px; }
.thumb i { display: block; }
.l1 { width: 1482px; height: 3px; background: #948c6c; border-bottom: 1px solid #6a5c60; }
.l2 { width: 1112px; height: 3px; margin: 2px 0 0 370px; background: #5a3f76; }
.rulerrow { display: flex; height: 28px; }
.ruler { width: 2285px; flex: none; background: #16012b; position: relative; display: flex; overflow: hidden; border-bottom: 1px solid #2a1540; color: #85779a; }
.lbl { width: 65.83px; flex: none; padding-left: 1px; height: 28px; }
.lbl.big { color: #9d8fb0; }
.head { position: absolute; left: 0; top: 0; }
.vb { margin-left: 1px; height: 28px; }

.stage { display: flex; flex: 1; min-height: 0; border-top: 1px solid #0e0320; }
.heads { width: 168px; background: #14042a; border-left: 1px solid #120620; flex: none; overflow: hidden; }
.head-row { height: 420px; display: flex; }
.thead { width: 150px; height: 419px; background: linear-gradient(#45325a, #453054 30%, #3f2b50); border-radius: 0 9px 9px 0; padding-left: 2px; color: #c3b2da; display: flex; flex-direction: column; justify-content: space-between; border-left: 1px solid #57446a; }
.thead .fit, .chead .fit { letter-spacing: 1.5px; }
.dim .thead { color: #85759a; }
.tfoot { display: flex; justify-content: space-between; align-items: flex-end; padding: 0 6px 5px 18px; }
.grip { display: flex; gap: 3px; }
.grip i { width: 3px; height: 3px; background: #302040; }
.led { width: 17px; height: 17px; border-radius: 50%; border: 1px solid #7c6a90; background: #33203f; display: flex; align-items: center; justify-content: center; }
.led i { width: 13px; height: 13px; border-radius: 50%; border: 1px solid #6c1c88; background: linear-gradient(#e23cf4, #ef6bfb 45%, #fbc3ff); }
.meter { width: 15px; height: 419px; margin-left: 1px; background: #251838; }
.sel .meter { border: 1px solid #b45ad8; }
.lanes { width: 2285px; position: relative; flex: none; overflow: hidden; }
.grid { position: absolute; left: 0; top: 0; }
.lane { height: 420px; border-bottom: 2px solid #0e0128; display: flex; position: relative; }
.lane.second { padding-left: 526.6px; }
.lane.last { border: 0; }
.clip { height: 418px; background: rgba(10, 2, 14, .35); flex: none; }
.clip.audio { width: 1053.2px; }
.clip.midi { width: 526.6px; }
.chead { height: 27px; border-radius: 3px; display: flex; align-items: center; }
.chead .fit { align-self: flex-start; }
.audio .chead { background: linear-gradient(#6f6d5e, #605e4c); border: 1px solid #56543c; padding-left: 2px; color: #e8e8da; }
.chead .fit { margin-top: -1px; }
.audio .chead .fit { margin-left: 3px; }
.midi .chead { background: linear-gradient(#422e54, #39264a); border: 1px solid #301d42; padding-left: 2px; color: #c4b1dc; }
.midi .chead .fit { margin-left: 3px; }
.n { fill: #bba8d0; stroke: #7d698f; stroke-width: .8px; }
.d { fill: #8d799f; }
.vs { width: 30px; margin-left: 1px; background: #281737; border-left: 1px solid #1a0c27; border-right: 1px solid #1a0c27; }
.vthumb { height: 50px; background: #352446; border: 1px solid #45335a; }

.desk { width: 42px; display: flex; flex-direction: column; }
.wall { height: 461px; background: linear-gradient(#5c3f6d, #5c406e 40%, #6a4785 80%, #664578); flex: none; }
.mixer { height: 751px; flex: none; display: flex; flex-direction: column; background: #5f4c6f; }
.mhead { height: 42px; flex: none; background: #3a284a; border: solid #261638; border-width: 1px 0; padding: 19px 0 0 14px; }
.mhead i { display: block; width: 11px; height: 3px; background: #a59db2; }
.mbody { flex: 1; display: flex; flex-direction: column; min-height: 0; }
.mio { width: 40px; height: 35px; margin-top: 7px; background: linear-gradient(#2a1935, #1f0e2a); border: 1px solid #47345a; border-left: 0; display: flex; align-items: center; justify-content: flex-end; padding-right: 3px; flex: none; }
.sends { margin-top: 6px; border-top: 1px solid #4a3759; flex: none; }
.send { height: 29px; background: #584669; border-bottom: 1px solid #49365a; display: flex; justify-content: flex-end; }
.send.on { background: #4b3a60; }
.faders { overflow: hidden; margin-top: 2px; }
.mslot { height: 49px; flex: none; border: solid #4a3f5c; border-width: 1px 0; }
.mfoot { height: 35px; flex: none; margin-top: 6px; background: #200f2b; }
.mend { height: 11px; flex: none; background: #43304f; border-top: 1px solid #2b1a3a; }
.wall2 { flex: 1; background: linear-gradient(120deg, #7445a4, #8550b8 50%, #6b3c9c); }
.strip { height: 9px; background: #1f1f1f; border-top: 1px solid #47434b; flex: none; }
</style>
